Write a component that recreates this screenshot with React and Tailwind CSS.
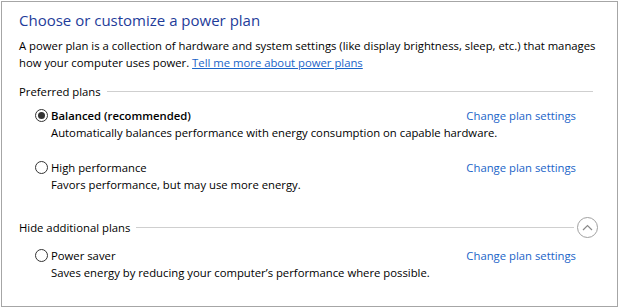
import React from 'react';

const FONT = { fontFamily: '"Open Sans", "Noto Sans", Arial, sans-serif' };

const Radio = ({ checked }) => (
  <span className="w-[13px] h-[13px] rounded-full border border-[#333333] bg-white flex items-center justify-center shrink-0">
    {checked && <span className="w-[7px] h-[7px] rounded-full bg-[#333333]" />}
  </span>
);

const SectionHeader = ({ label, pr, children }) => (
  <div className={`flex items-center h-[18px] ${pr}`}>
    <span className="text-[11.3px] leading-[17px] text-black">{label}</span>
    <span className="flex-1 h-px bg-[#cfcfcf] ml-[6px]" />
    {children}
  </div>
);

const Plan = ({ name, desc, checked, bold }) => (
  <div className="pl-[16px] pr-[41px]">
    <div className="flex items-center h-[17px]">
      <div className="flex-1 flex items-center gap-[3px]">
        <Radio checked={checked} />
        <span className={`text-[11.3px] leading-[17px] text-black ${bold ? 'font-semibold' : ''}`}>{name}</span>
      </div>
      <a className="text-[11.3px] leading-[17px] text-[#1a64c8] whitespace-nowrap -mt-px">Change plan settings</a>
    </div>
    <div className="pl-[16px] text-[11.3px] leading-[17px] text-black">{desc}</div>
  </div>
);

export default function App() {
  return (
    <div className="w-[619px] h-[308px] bg-white p-px" style={FONT}>
      <div className="w-[617px] h-[306px] border border-[#a6a6a6] pl-[17px] pt-[7px]">
        <h1 className="text-[15px] leading-[22px] text-[#1e3c9a] font-normal">
          Choose or customize a power plan
        </h1>
        <p className="mt-[6px] text-[11.3px] leading-[17px] text-black pr-[14px]">
          A power plan is a collection of hardware and system settings (like display brightness, sleep, etc.) that manages how your computer uses power.{' '}
          <a className="text-[#1a64c8] underline">Tell me more about power plans</a>
        </p>

        <div className="mt-[11px]">
          <SectionHeader label="Preferred plans" pr="pr-[24px]" />
        </div>

        <div className="mt-[7px]">
          <Plan name="Balanced (recommended)" desc="Automatically balances performance with energy consumption on capable hardware." checked bold />
        </div>
        <div className="mt-[18px]">
          <Plan name="High performance" desc="Favors performance, but may use more energy." />
        </div>

        <div className="mt-[25px]">
          <SectionHeader label="Hide additional plans" pr="pr-[19px]">
            <span className="ml-[3px] w-[21px] h-[21px] rounded-full border border-[#a0a0a0] flex items-center justify-center">
              <svg width="11" height="7" viewBox="0 0 11 7" fill="none">
                <path d="M1 6 L5.5 1.5 L10 6" stroke="#8a8a8a" strokeWidth="1.2" />
              </svg>
            </span>
          </SectionHeader>
        </div>

        <div className="mt-[11px]">
          <Plan name="Power saver" desc="Saves energy by reducing your computer’s performance where possible." />
        </div>
      </div>
    </div>
  );
}
